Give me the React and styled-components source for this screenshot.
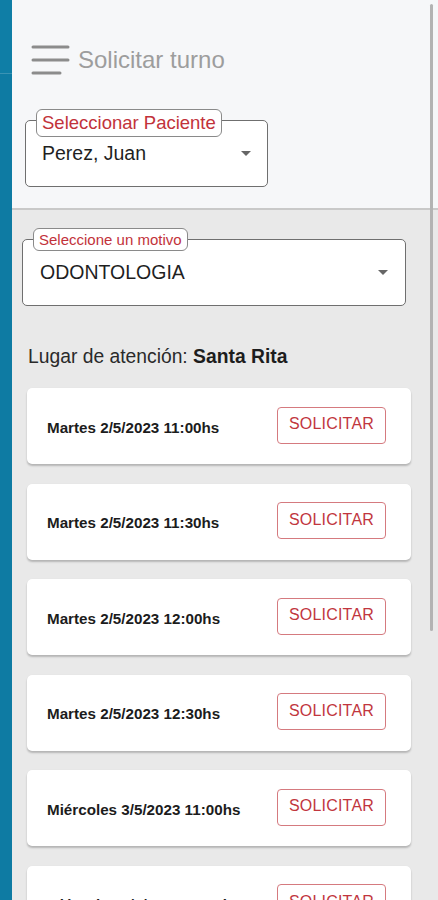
import React from 'react';
import styled, { createGlobalStyle } from 'styled-components';

const GlobalStyle = createGlobalStyle`
  html, body {
    margin: 0;
    padding: 0;
    height: 900px;
    overflow: hidden;
    background: #e9e9e9;
    font-family: "Liberation Sans", Arial, sans-serif;
  }
`;

const Page = styled.div`
  position: relative;
  display: flex;
  width: 438px;
  height: 900px;
  overflow: hidden;
`;

const Strip = styled.div`
  width: 12px;
  flex-shrink: 0;
  background: #0e7ba3;
  border-top: 73px solid #0f7ea6;
  box-shadow: inset 0 1px 0 #3a93b4;
`;

const Main = styled.main`
  flex: 1;
  display: flex;
  flex-direction: column;
  background: #e9e9e9;
`;

const Header = styled.header`
  flex-shrink: 0;
  height: 210px;
  box-sizing: border-box;
  background: #f6f7f9;
  border-bottom: 2px solid #c9c9c9;
  padding: 44px 0 0 13px;
`;

const TitleRow = styled.div`
  display: flex;
  align-items: center;
  gap: 7px;
  padding-left: 6px;
  height: 32px;
`;

const Title = styled.h1`
  margin: 0;
  font-size: 24px;
  font-weight: 400;
  color: #9d9d9d;
`;

const SelectBox = styled.div`
  position: relative;
  flex-shrink: 0;
  box-sizing: border-box;
  width: ${p => p.$width}px;
  height: 67px;
  margin-top: ${p => p.$top}px;
  border: 1px solid #6f6f6f;
  border-radius: 5px;
  background: #ffffff;
  display: flex;
  align-items: center;
  justify-content: space-between;
  padding: 0 ${p => p.$padRight}px 0 ${p => p.$padLeft}px;
`;

const Label = styled.span`
  position: absolute;
  left: 10px;
  top: -12px;
  box-sizing: border-box;
  height: ${p => p.$small ? 23 : 28}px;
  padding: 0 5px;
  display: flex;
  align-items: center;
  border: 1px solid #8a8a8a;
  border-radius: 6px;
  background: #ffffff;
  color: #c2323a;
  font-size: ${p => p.$small ? 15 : 18.5}px;
  white-space: nowrap;
`;

const Value = styled.span`
  font-size: 19.5px;
  color: #1f1f1f;
`;

const Arrow = styled.span`
  width: 0;
  height: 0;
  border-left: 5px solid transparent;
  border-right: 5px solid transparent;
  border-top: 5px solid #666;
`;

const Body = styled.section`
  flex-shrink: 0;
  padding: 0 0 0 10px;
  display: flex;
  flex-direction: column;
`;

const Place = styled.p`
  margin: 40px 0 0 6px;
  font-size: 19.3px;
  color: #2a2a2a;
  line-height: 22px;

  strong {
    font-weight: 700;
    color: #1d1d1d;
  }
`;

const List = styled.div`
  display: flex;
  flex-direction: column;
  gap: 19.6px;
  margin: 20px 0 0 5px;
  width: 384px;
`;

const Card = styled.div`
  flex-shrink: 0;
  height: 76px;
  box-sizing: border-box;
  background: #ffffff;
  border-radius: 5px;
  box-shadow: 0 2px 2px rgba(0, 0, 0, 0.22), 0 0 1px rgba(0, 0, 0, 0.08);
  display: flex;
  align-items: center;
  justify-content: space-between;
  padding: 0 25px 0 20px;
`;

const Slot = styled.span`
  font-size: 15.2px;
  font-weight: 700;
  color: #1c1c1c;
  margin-top: 2px;
`;

const Button = styled.button`
  width: 109px;
  height: 37px;
  margin-top: -2px;
  border: 1px solid #d57a7f;
  border-radius: 4px;
  background: #ffffff;
  color: #c1363e;
  font-family: inherit;
  font-size: 16px;
  letter-spacing: 0.2px;
  padding: 0 0 2px;
`;

const Scrollbar = styled.div`
  position: absolute;
  right: 5px;
  top: 4px;
  width: 3px;
  height: 627px;
  border-radius: 2px;
  background: #b3b3b3;
`;

const Menu = () => (
  <svg width="40" height="32" viewBox="0 0 40 32">
    <g stroke="#8c8c8c" strokeWidth="3" strokeLinecap="round">
      <line x1="2" y1="3" x2="37" y2="3" />
      <line x1="2" y1="16" x2="37" y2="16" />
      <line x1="2" y1="29" x2="29" y2="29" />
    </g>
  </svg>
);

const slots = [
  'Martes 2/5/2023 11:00hs',
  'Martes 2/5/2023 11:30hs',
  'Martes 2/5/2023 12:00hs',
  'Martes 2/5/2023 12:30hs',
  'Miércoles 3/5/2023 11:00hs',
  'Miércoles 3/5/2023 11:30hs',
];

export default function App() {
  return (
    <Page>
      <GlobalStyle />
      <Strip />
      <Main>
        <Header>
          <TitleRow>
            <Menu />
            <Title>Solicitar turno</Title>
          </TitleRow>
          <SelectBox $width={243} $top={44} $padLeft={16} $padRight={16}>
            <Label>Seleccionar Paciente</Label>
            <Value>Perez, Juan</Value>
            <Arrow />
          </SelectBox>
        </Header>
        <Body>
          <SelectBox $width={384} $top={29} $padLeft={17} $padRight={17}>
            <Label $small>Seleccione un motivo</Label>
            <Value>ODONTOLOGIA</Value>
            <Arrow />
          </SelectBox>
          <Place>
            Lugar de atención: <strong>Santa Rita</strong>
          </Place>
          <List>
            {slots.map(s => (
              <Card key={s}>
                <Slot>{s}</Slot>
                <Button>SOLICITAR</Button>
              </Card>
            ))}
          </List>
        </Body>
      </Main>
      <Scrollbar />
    </Page>
  );
}
